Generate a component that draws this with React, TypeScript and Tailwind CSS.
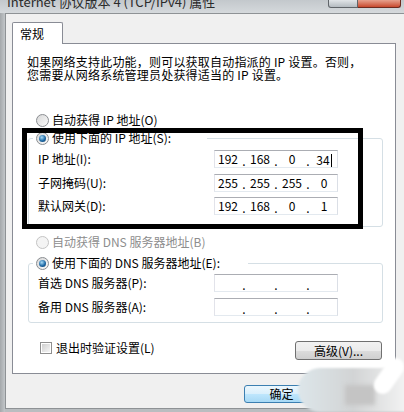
import React from 'react';

const FONT = "font-['Noto_Sans_CJK_SC','Noto_Sans_CJK_JP',sans-serif]";

const Radio: React.FC<{ checked?: boolean; disabled?: boolean }> = ({ checked, disabled }) => (
  <span
    className={`inline-flex h-[13px] w-[13px] shrink-0 items-center justify-center rounded-full border ${
      disabled ? 'border-[#c4c4c4] bg-[#f4f4f4]' : 'border-[#8a8d91] bg-gradient-to-br from-[#d8d8d8] to-[#fbfbfb]'
    }`}
  >
    {checked && (
      <span className="h-[7px] w-[7px] rounded-full bg-[radial-gradient(circle_at_40%_35%,#a9dcf7,#1f6aa6_55%,#0c355c)]" />
    )}
  </span>
);

const IpBox: React.FC<{ parts: string[]; cursor?: boolean }> = ({ parts, cursor }) => (
  <div className="flex h-[18px] w-[124px] items-center border border-[#abadb3] border-b-[#e3e9ef] border-l-[#e2e3ea] border-r-[#dbdfe6] bg-white text-[12px] leading-[14px] text-black">
    {parts.map((p, i) => (
      <React.Fragment key={i}>
        {i > 0 && <span className="w-[6px] pt-[3px] text-center">.</span>}
        <span className="flex-1 text-center">
          {p}
          {cursor && i === 3 && <span className="ml-px inline-block h-[13px] w-px translate-y-[2px] bg-black" />}
        </span>
      </React.Fragment>
    ))}
  </div>
);

const Row: React.FC<{ label: string; parts: string[]; cursor?: boolean }> = ({ label, parts, cursor }) => (
  <div className="flex h-[18px] items-center justify-between pl-[9px] pr-[44px]">
    <span className="text-[12px] leading-[14px]">{label}</span>
    <IpBox parts={parts} cursor={cursor} />
  </div>
);

const Button: React.FC<{ label: string; className?: string; primary?: boolean }> = ({ label, className = '', primary }) => (
  <div
    className={`flex items-center justify-center rounded-[3px] border text-[12px] leading-[14px] text-black ${
      primary
        ? 'border-[#3c7fb1] bg-[linear-gradient(#ecf7fd_0%,#d9effc_50%,#bee6fd_51%,#a7d9f5_100%)]'
        : 'border-[#707070] bg-[linear-gradient(#f2f2f2_0%,#ebebeb_50%,#dddddd_51%,#cfcfcf_100%)]'
    } ${className}`}
  >
    {label}
  </div>
);

const App: React.FC = () => {
  return (
    <div className={`relative h-[412px] w-[404px] overflow-hidden bg-[#b9bdc0] text-black ${FONT}`}>
      {/* title bar */}
      <div className="flex h-[13px] items-start overflow-hidden bg-gradient-to-b from-[#c3c8cc] to-[#d5d9dc]">
        <div className="-mt-[6px] pl-[7px] text-[13px] leading-[16px] text-[#2b2b2b]">
          Internet 协议版本 4 (TCP/IPv4) 属性
        </div>
        <div className="ml-auto mr-[3px] flex h-[8px]">
          <div className="h-[8px] w-[30px] rounded-bl-[3px] border border-t-0 border-[#5f6469] bg-gradient-to-b from-[#e1e5e8] to-[#b4bbc1]" />
          <div className="h-[8px] w-[43px] rounded-br-[3px] border border-l-0 border-t-0 border-[#6d2a1f] bg-gradient-to-b from-[#e6a08d] to-[#c7472c]" />
        </div>
      </div>

      <div className="flex h-[399px]">
        <div className="w-[5px] bg-gradient-to-r from-[#a4a8ab] to-[#c2c6c9]" />
        <div className="flex h-[396px] flex-1 flex-col border-b border-l border-t border-[#8e9295] bg-[#f0f0f0] pl-[6px] pt-[8px]">
          {/* tab */}
          <div className="relative z-10 -mb-px flex h-[22px] w-[51px] items-center rounded-t-[2px] border border-b-0 border-[#898c95] bg-white pl-[7px] text-[12px] leading-[14px]">
            常规
          </div>

          {/* panel */}
          <div className="flex h-[331px] w-[384px] flex-col border border-[#898c95] bg-white">
            <p className="pl-[14px] pt-[11px] text-[12px] leading-[13px] tracking-[0.2px]">
              如果网络支持此功能，则可以获取自动指派的 IP 设置。否则，
              <br />
              您需要从网络系统管理员处获得适当的 IP 设置。
            </p>

            <div className="mt-[32px] flex h-[14px] items-center gap-[3px] pl-[23px] text-[12px] leading-[14px]">
              <Radio />
              <span>自动获得 IP 地址(O)</span>
            </div>

            <fieldset className="ml-[15px] mt-[4px] w-[355px] rounded-[3px] border border-[#d5dfe5] p-0 pb-[11px]">
              <legend className="ml-[4px] flex h-[14px] w-[174px] items-center gap-[3px] p-0 pl-[3px] text-[12px] leading-[14px]">
                <Radio checked />
                <span>使用下面的 IP 地址(S):</span>
              </legend>
              <div className="mt-[5px] flex flex-col gap-[5.5px]">
                <Row label="IP 地址(I):" parts={['192', '168', '0', '34']} cursor />
                <Row label="子网掩码(U):" parts={['255', '255', '255', '0']} />
                <Row label="默认网关(D):" parts={['192', '168', '0', '1']} />
              </div>
            </fieldset>

            <div className="mt-[8px] flex h-[14px] items-center gap-[3px] pl-[23px] text-[12px] leading-[14px] text-[#8d8d8d]">
              <Radio disabled />
              <span>自动获得 DNS 服务器地址(B)</span>
            </div>

            <fieldset className="ml-[15px] mt-[7px] w-[355px] rounded-[3px] border border-[#d5dfe5] p-0 pb-[6px]">
              <legend className="ml-[4px] flex h-[14px] w-[215px] items-center gap-[3px] p-0 pl-[3px] text-[12px] leading-[14px]">
                <Radio checked />
                <span>使用下面的 DNS 服务器地址(E):</span>
              </legend>
              <div className="mt-[4px] flex flex-col gap-[6px]">
                <Row label="首选 DNS 服务器(P):" parts={['', '', '', '']} />
                <Row label="备用 DNS 服务器(A):" parts={['', '', '', '']} />
              </div>
            </fieldset>

            <div className="mt-[18px] flex items-start justify-between pl-[27px] pr-[13px]">
              <div className="flex items-center gap-[4px] text-[12px] leading-[14px]">
                <span className="flex h-[12px] w-[12px] items-center justify-center border border-[#8f8f8f] bg-white">
                  <span className="h-[8px] w-[8px] bg-gradient-to-br from-[#cfcfcf] to-[#f6f6f6]" />
                </span>
                <span>退出时验证设置(L)</span>
              </div>
              <Button label="高级(V)..." className="h-[19px] w-[87px]" />
            </div>
          </div>

          <div className="mt-[11px] pl-[232px]">
            <Button label="确定" primary className="h-[18px] w-[75px]" />
          </div>
        </div>
      </div>

      {/* black annotation frame */}
      <div className="absolute left-[22px] top-[128px] h-[101px] w-[341px] border-[5px] border-black" />

      {/* watermark blob */}
      <div className="absolute left-[298px] top-[368px] h-[44px] w-[110px] rounded-l-[22px] bg-gradient-to-r from-[#dde6ea] via-[#d2d4d5] to-[#f4f4f4] blur-[1px]" />
      <div className="absolute left-[345px] top-[385px] h-[20px] w-[30px] bg-[#c4c4c4] blur-[2px]" />
      <div className="absolute left-[380px] top-[356px] h-[40px] w-[18px] rotate-[35deg] rounded-full bg-white blur-[1px]" />
    </div>
  );
};

export default App;
